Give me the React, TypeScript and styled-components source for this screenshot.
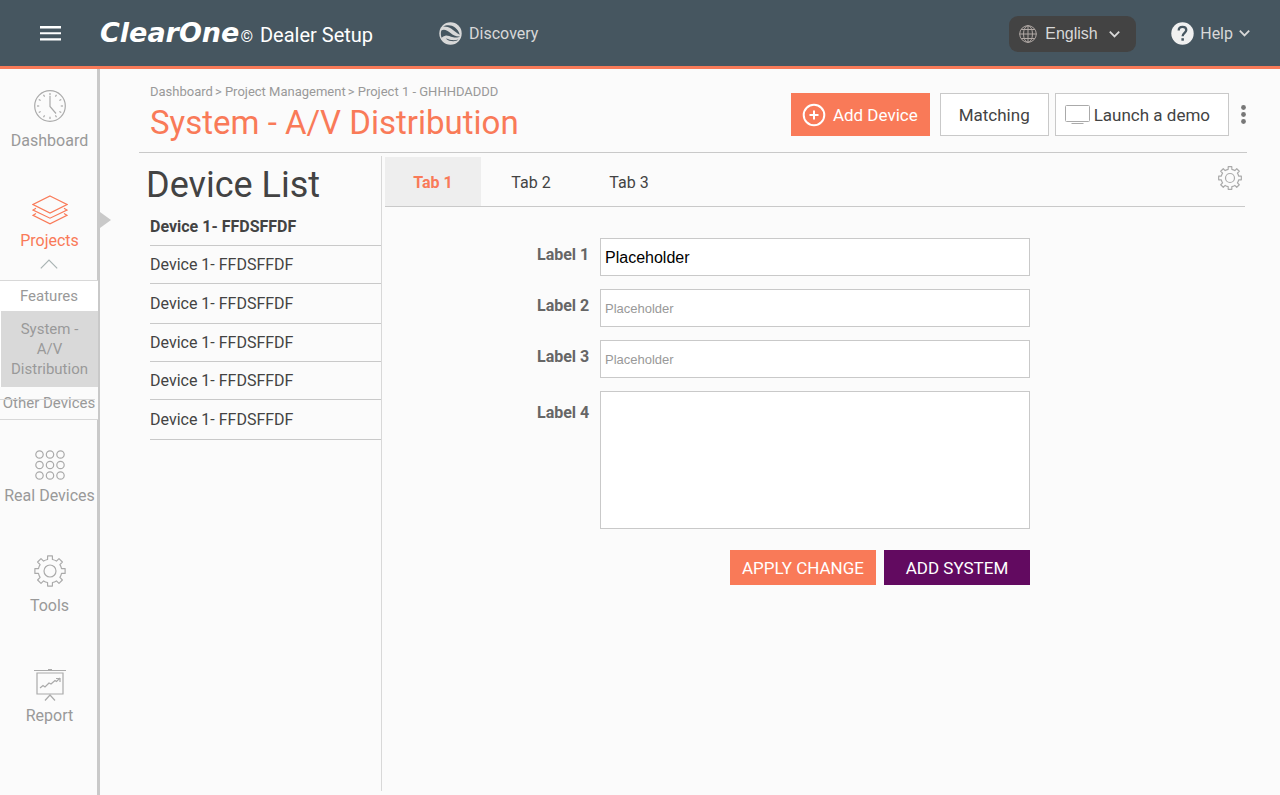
import React from "react";
import styled, { createGlobalStyle, css } from "styled-components";

const color = {
  slate: "#465660",
  orange: "#f97a58",
  purple: "#620a60",
  page: "#fbfbfb",
  rule: "#c9c9c9",
  muted: "#999999",
  text: "#434343",
  bright: "#d8d8d8",
};

const sans = `Roboto, "Liberation Sans", sans-serif`;
const arial = `"Liberation Sans", Arial, sans-serif`;

const GlobalStyle = createGlobalStyle`
  *, *::before, *::after { box-sizing: border-box; }
  body { margin: 0; background: ${color.page}; color: ${color.text}; font: 16px/20px ${sans}; }
  button, input, textarea, select { font: inherit; color: inherit; margin: 0; border-radius: 0; }
  button { padding: 0; border: 0; background: none; cursor: pointer; white-space: nowrap; }
  a { color: inherit; text-decoration: none; }
  h1, h2, ul, ol, p { margin: 0; padding: 0; font-weight: 400; list-style: none; }
  svg { display: block; flex: none; }
`;

/* ---------- top bar ---------- */

const TopBar = styled.header`
  display: flex;
  align-items: center;
  height: 69px;
  padding: 0 30px 0 40px;
  background: ${color.slate};
  border-bottom: 3px solid ${color.orange};
  color: ${color.bright};
`;

const MenuButton = styled.button`
  margin-right: 39px;
`;

const Brand = styled.a`
  display: flex;
  align-items: baseline;
  margin-right: 66px;
  color: #fff;
  font-size: 20px;
  white-space: nowrap;
`;

const BrandName = styled.span`
  margin-right: 1px;
  font: italic 700 27px/32px "DejaVu Sans", sans-serif;
`;

const BrandMark = styled.span`
  margin-right: 7px;
  font-size: 16px;
`;

const TopLink = styled.a`
  display: flex;
  align-items: center;
  gap: 7px;
`;

const TopLabel = styled.span`
  padding-top: 2px;
`;

const Language = styled.label`
  position: relative;
  display: flex;
  align-items: center;
  height: 36px;
  margin: 2px 35px 0 auto;
  border-radius: 9px;
  background: ${color.text};

  svg { position: absolute; pointer-events: none; }
  svg:first-child { left: 10px; }
  svg:last-child { right: 16px; }
`;

const LanguageSelect = styled.select`
  appearance: none;
  width: 127px;
  height: 36px;
  padding: 0 30px 0 36px;
  border: 0;
  background: none;
  font-family: ${arial};
`;

const HelpButton = styled.button`
  display: flex;
  align-items: center;
  gap: 6px;
`;

/* ---------- side navigation ---------- */

const Body = styled.div`
  display: flex;
  min-height: calc(100vh - 69px);
`;

const SideNav = styled.nav`
  flex: none;
  width: 100px;
  padding-top: 21px;
  border-right: 3px solid ${color.rule};
  color: ${color.muted};
`;

const NavItem = styled.a<{ $roomy?: boolean; $active?: boolean; $after: number }>`
  position: relative;
  display: flex;
  flex-direction: column;
  align-items: center;
  gap: ${(p) => (p.$roomy ? 9 : 5)}px;
  margin-bottom: ${(p) => p.$after}px;
  padding-left: 2px;
  white-space: nowrap;

  ${(p) =>
    p.$active &&
    css`
      color: ${color.orange};
      &::after {
        content: "";
        position: absolute;
        left: 100%;
        top: 18px;
        margin-left: 3px;
        border: solid transparent;
        border-width: 8px 0 8px 11px;
        border-left-color: ${color.rule};
      }
    `}
`;

const NavIcon = styled.span`
  display: grid;
  place-items: center;
  height: 32px;
`;

const Collapse = styled.button`
  display: block;
  margin: 0 auto 11px;
`;

const SubMenu = styled.ul`
  position: relative;
  width: 98px;
  margin-bottom: 29px;
  border-top: 1px solid ${color.bright};
  border-bottom: 1px solid ${color.bright};
  background: #fff;
  font-size: 15px;
  text-align: center;
`;

const SubItem = styled.li<{ $kind?: "current" | "struck" }>`
  position: relative;
  padding: 5px 0;
  white-space: nowrap;

  ${(p) =>
    p.$kind === "current" &&
    css`
      margin-left: 1px;
      padding: 8px 6px;
      background: #d9d9d9;
      white-space: normal;
    `}

  ${(p) =>
    p.$kind === "struck" &&
    css`
      padding: 6px 0;
      background: ${color.page};
      &::after {
        content: "";
        position: absolute;
        inset: 12px 3px auto 0;
        border-top: 1px solid ${color.bright};
      }
    `}
`;

/* ---------- page ---------- */

const Page = styled.main`
  display: flex;
  flex-direction: column;
  flex: 1;
  min-width: 0;
  padding: 0 33px 4px 39px;
`;

const PageHeader = styled.div`
  display: flex;
  justify-content: space-between;
  align-items: flex-start;
  padding: 15px 0 9px 11px;
  border-bottom: 1px solid ${color.rule};
`;

const Crumbs = styled.ol`
  display: flex;
  gap: 2px;
  color: ${color.muted};
  font-size: 13px;
  line-height: 16px;
  white-space: nowrap;

  li + li::before { content: "> "; }
`;

const Title = styled.h1`
  margin-top: 3px;
  color: ${color.orange};
  font-size: 33px;
  line-height: 40px;
  white-space: nowrap;
`;

const Actions = styled.div`
  display: flex;
  align-items: center;
  gap: 6px;
  padding-top: 9px;
`;

const ActionButton = styled.button<{ $primary?: boolean }>`
  display: flex;
  align-items: center;
  height: 43px;
  padding: 0 18px;
  border: 1px solid ${color.rule};
  background: #fff;
  font-size: 17px;

  &:has(svg) { padding-left: 9px; gap: 4px; }

  ${(p) =>
    p.$primary &&
    css`
      && { padding: 0 11px 0 10px; gap: 7px; }
      margin-right: 4px;
      border-color: ${color.orange};
      background: ${color.orange};
      color: #fff;
    `}
`;

const MoreButton = styled.button`
  padding: 0 1px 0 6px;
`;

const Columns = styled.div`
  display: flex;
  flex: 1;
  gap: 3px;
  padding: 3px 2px 0 0;
`;

const DeviceColumn = styled.aside`
  flex: none;
  width: 243px;
  padding-top: 6px;
  border-right: 1px solid ${color.bright};
`;

const DeviceHeading = styled.h2`
  padding-left: 7px;
  font-size: 36px;
  line-height: 46px;
`;

const DeviceList = styled.ul`
  margin-left: 11px;
`;

const DeviceRow = styled.li<{ $tall?: boolean; $selected?: boolean }>`
  display: flex;
  align-items: center;
  height: ${(p) => (p.$tall ? 40 : 38)}px;
  border-bottom: 1px solid ${color.rule};
  font-weight: ${(p) => (p.$selected ? 700 : 400)};
`;

const Panel = styled.section`
  flex: 1;
  min-width: 0;
`;

const Tabs = styled.div`
  display: flex;
  align-items: center;
  gap: 2px;
  padding: 1px 3px 0 0;
  border-bottom: 1px solid ${color.rule};
`;

const Tab = styled.button<{ $selected?: boolean }>`
  width: 96px;
  height: 49px;
  padding-top: 2px;
  ${(p) =>
    p.$selected &&
    css`
      background: #eeeeee;
      color: ${color.orange};
      font-weight: 700;
    `}
`;

const Settings = styled.button`
  margin: -8px 0 0 auto;
`;

const Form = styled.form`
  display: flex;
  flex-direction: column;
  gap: 13px;
  padding: 31px 25% 0 152px;
`;

const Field = styled.label`
  display: flex;
  align-items: flex-start;
`;

const FieldName = styled.span<{ $area?: boolean }>`
  flex: none;
  width: 63px;
  padding-top: ${(p) => (p.$area ? 12 : 7)}px;
  color: #666;
  font-weight: 700;
`;

const inputBox = css`
  flex: 1;
  min-width: 0;
  padding: 1px 4px 0;
  border: 1px solid ${color.rule};
  background: #fff;
  color: #000;
  font-family: ${arial};
`;

const TextInput = styled.input`
  ${inputBox}
  height: 38px;
  &:placeholder-shown { font-size: 13px; }
  &::placeholder { color: ${color.muted}; }
`;

const TextArea = styled.textarea`
  ${inputBox}
  height: 138px;
  resize: none;
`;

const FormActions = styled.div`
  display: flex;
  justify-content: flex-end;
  gap: 8px;
  padding-top: 8px;
`;

const FormButton = styled.button<{ $purple?: boolean }>`
  width: 146px;
  height: 35px;
  background: ${(p) => (p.$purple ? color.purple : color.orange)};
  color: #fff;
  font-size: 17px;
`;

/* ---------- icons ---------- */

const Chevron = () => (
  <svg width="11" height="8" viewBox="0 0 11 8" fill="none" stroke="currentColor" strokeWidth="1.8" aria-hidden>
    <path d="M.8 1.700 5.500 6.400l4.700-4.700" />
  </svg>
);

const MenuIcon = () => (
  <svg width="21" height="15" viewBox="0 0 21 15" fill="#fff" aria-hidden>
    <path d="M0 0h21v2.600H0zM0 6.200h21v2H0zM0 12.200h21v2.200H0z" />
  </svg>
);

const DiscoveryIcon = () => (
  <svg width="23" height="23" viewBox="0 0 23 23" aria-hidden>
    <circle cx="11.5" cy="11.5" r="11.2" fill={color.bright} />
    <g fill={color.slate}>
      <path d="M4 4.600C7.500 2.600 12.500 2.700 16 5.400c2.200 1.700 3.900 4.200 4.800 7.300-3-1.300-5.200-3.700-8.400-5.900C9.800 5.100 7 4.400 4 4.600z" />
      <path d="M2.300 8.400C5.500 6.900 8.500 8.600 11.500 11c2.700 2.200 5.700 3.700 9.500 3.400-1.200 1-4 1.500-6.800.9-3.700-.8-5.500-2-7.900-1.600-1.500.3-2.700 1-3.700 2-.8-2.400-1-4.900-.3-7.300z" />
      <path d="M6.800 16.500c2.100 0 3.200 1.200 5.400 1.500 2.500.3 4.800.2 7.200-.5-1.200 1.200-2.900 1.700-5 1.700-2.900 0-5.800-.5-7.600-2.700z" />
    </g>
  </svg>
);

const GlobeIcon = () => (
  <svg width="18" height="18" viewBox="0 0 18 18" fill="none" stroke="#b0a8a4" strokeWidth="1" aria-hidden>
    <circle cx="9" cy="9" r="8.300" />
    <ellipse cx="9" cy="9" rx="4.500" ry="8.300" />
    <path d="M9 .5v17M.5 9h17M2.200 4.500h13.600M2.200 13.500h13.600" />
  </svg>
);

const HelpIcon = () => (
  <svg width="23" height="23" viewBox="0 0 23 23" aria-hidden>
    <circle cx="11.500" cy="11.500" r="11.200" fill="#f0f0f0" />
    <path d="M7.700 8.400c0-2.200 1.600-3.600 3.800-3.600s3.800 1.300 3.800 3.300c0 2.600-3.700 3-3.700 6.200" fill="none" stroke={color.slate} strokeWidth="2.300" />
    <path d="M10.400 16.200h2.500v2.500h-2.500z" fill={color.slate} />
  </svg>
);

const ClockIcon = () => (
  <svg width="32" height="32" viewBox="0 0 32 32" fill="none" stroke="#aaa" strokeWidth="1.200" aria-hidden>
    <circle cx="16" cy="16" r="15.300" />
    {Array.from({ length: 12 }, (_, i) => (
      <path key={i} d="M16 3v2.200" transform={`rotate(${i * 30} 16 16)`} />
    ))}
    <path d="M16 6v10.500l6 7" />
  </svg>
);

const LayersIcon = () => (
  <svg width="36" height="30" viewBox="0 0 36 30" fill="none" stroke={color.orange} strokeWidth="1.200" aria-hidden>
    <path d="M18 1 35 9.500 18 18 1 9.500z" />
    <path d="M4 13.200 1 15l17 8.200L35 15l-3-1.800" />
    <path d="M4 18.500 1 20.300l17 8.500 17-8.500-3-1.800" />
  </svg>
);

const CollapseIcon = () => (
  <svg width="18" height="10" viewBox="0 0 18 10" fill="none" stroke="#a9b3b3" strokeWidth="1.200" aria-hidden>
    <path d="M.8 9.300 9 1l8.200 8.300" />
  </svg>
);

const GridIcon = () => (
  <svg width="30" height="30" viewBox="0 0 30 30" fill="none" stroke="#aaa" strokeWidth="1.200" aria-hidden>
    {[4.5, 15, 25.5].map((y) =>
      [4.5, 15, 25.5].map((x) => <circle key={`${x}-${y}`} cx={x} cy={y} r="3.700" />)
    )}
  </svg>
);

const gearPath = (() => {
  const at = (deg: number, r: number) => {
    const a = ((deg - 90) * Math.PI) / 180;
    return `${(16 + r * Math.cos(a)).toFixed(2)} ${(16 + r * Math.sin(a)).toFixed(2)}`;
  };
  const teeth = Array.from({ length: 8 }, (_, i) => {
    const c = i * 45;
    return `${at(c - 12, 11.8)} L${at(c - 9, 15.3)} L${at(c + 9, 15.3)} L${at(c + 12, 11.8)}`;
  });
  return `M${teeth.join(" A11.8 11.8 0 0 1 ")} A11.8 11.8 0 0 1 ${at(-12, 11.8)}z`;
})();

const GearIcon = ({ size, hub }: { size: number; hub: number }) => (
  <svg width={size} height={size} viewBox="0 0 32 32" fill="none" stroke="#aaa" strokeWidth={38 / size} strokeLinejoin="round" aria-hidden>
    <path d={gearPath} />
    <circle cx="16" cy="16" r={hub} />
  </svg>
);

const ReportIcon = () => (
  <svg width="32" height="32" viewBox="0 0 32 32" fill="none" stroke="#aaa" aria-hidden>
    <path d="M0 1.500h32M14 .5h4" />
    <path d="M3 4h26v21H3z" strokeWidth="1.200" />
    <path d="m6 19 3-2.500 2 1.500 4-4 2 1 4-3.500 1.500 1L26 9M22 9.500h4V13M11 31.500l5-5.500 5 5.500" strokeWidth="1.200" />
  </svg>
);

const PlusIcon = () => (
  <svg width="24" height="24" viewBox="0 0 24 24" fill="none" stroke="#fff" strokeWidth="2" aria-hidden>
    <circle cx="12" cy="12" r="10.300" />
    <path d="M12 7.500v9M7.500 12h9" />
  </svg>
);

const ScreenIcon = () => (
  <svg width="25" height="19" viewBox="0 0 25 19" fill="none" stroke="#aaa" aria-hidden>
    <rect x=".5" y=".5" width="24" height="16" rx="1" />
    <path d="M6.500 18.500h12" />
  </svg>
);

const MoreIcon = () => (
  <svg width="5" height="19" viewBox="0 0 5 19" fill="#777" aria-hidden>
    <circle cx="2.500" cy="2.500" r="2.400" />
    <circle cx="2.500" cy="9.500" r="2.400" />
    <circle cx="2.500" cy="16.500" r="2.400" />
  </svg>
);

/* ---------- content ---------- */

const devices: { selected?: boolean; tall?: boolean }[] = [
  { selected: true },
  {},
  { tall: true },
  {},
  {},
  { tall: true },
];

export default function App() {
  return (
    <>
      <GlobalStyle />
      <TopBar>
        <MenuButton type="button" aria-label="Menu"><MenuIcon /></MenuButton>
        <Brand href="#home">
          <BrandName>ClearOne</BrandName>
          <BrandMark>©</BrandMark>
          <span>Dealer Setup</span>
        </Brand>
        <TopLink href="#discovery"><DiscoveryIcon /><TopLabel>Discovery</TopLabel></TopLink>
        <Language>
          <GlobeIcon />
          <LanguageSelect aria-label="Language" defaultValue="English">
            <option>English</option>
          </LanguageSelect>
          <Chevron />
        </Language>
        <HelpButton type="button"><HelpIcon /><TopLabel>Help</TopLabel><Chevron /></HelpButton>
      </TopBar>

      <Body>
        <SideNav>
          <NavItem href="#dashboard" $roomy $after={43}>
            <NavIcon><ClockIcon /></NavIcon>Dashboard
          </NavItem>
          <NavItem href="#projects" $active $after={8}>
            <NavIcon><LayersIcon /></NavIcon>Projects
          </NavItem>
          <Collapse type="button" aria-label="Collapse projects"><CollapseIcon /></Collapse>
          <SubMenu>
            <SubItem><a href="#features">Features</a></SubItem>
            <SubItem $kind="current"><a href="#system">System - A/V Distribution</a></SubItem>
            <SubItem $kind="struck"><a href="#other">Other Devices</a></SubItem>
          </SubMenu>
          <NavItem href="#real" $after={49}>
            <NavIcon><GridIcon /></NavIcon>Real Devices
          </NavItem>
          <NavItem href="#tools" $roomy $after={53}>
            <NavIcon><GearIcon size={32} hub={6} /></NavIcon>Tools
          </NavItem>
          <NavItem href="#report" $after={0}>
            <NavIcon><ReportIcon /></NavIcon>Report
          </NavItem>
        </SideNav>

        <Page>
          <PageHeader>
            <div>
              <Crumbs>
                <li><a href="#dashboard">Dashboard</a></li>
                <li><a href="#management">Project Management</a></li>
                <li>Project 1 - GHHHDADDD</li>
              </Crumbs>
              <Title>System - A/V Distribution</Title>
            </div>
            <Actions>
              <ActionButton type="button" $primary><PlusIcon />Add Device</ActionButton>
              <ActionButton type="button">Matching</ActionButton>
              <ActionButton type="button"><ScreenIcon />Launch a demo</ActionButton>
              <MoreButton type="button" aria-label="More actions"><MoreIcon /></MoreButton>
            </Actions>
          </PageHeader>

          <Columns>
            <DeviceColumn>
              <DeviceHeading>Device List</DeviceHeading>
              <DeviceList>
                {devices.map((d, i) => (
                  <DeviceRow key={i} $tall={d.tall} $selected={d.selected}>
                    <a href="#device">Device 1- FFDSFFDF</a>
                  </DeviceRow>
                ))}
              </DeviceList>
            </DeviceColumn>

            <Panel>
              <Tabs role="tablist">
                <Tab type="button" role="tab" aria-selected $selected>Tab 1</Tab>
                <Tab type="button" role="tab" aria-selected={false}>Tab 2</Tab>
                <Tab type="button" role="tab" aria-selected={false}>Tab 3</Tab>
                <Settings type="button" aria-label="Settings"><GearIcon size={24} hub={6} /></Settings>
              </Tabs>
              <Form onSubmit={(e) => e.preventDefault()}>
                <Field>
                  <FieldName>Label 1</FieldName>
                  <TextInput type="text" defaultValue="Placeholder" />
                </Field>
                <Field>
                  <FieldName>Label 2</FieldName>
                  <TextInput type="text" placeholder="Placeholder" />
                </Field>
                <Field>
                  <FieldName>Label 3</FieldName>
                  <TextInput type="text" placeholder="Placeholder" />
                </Field>
                <Field>
                  <FieldName $area>Label 4</FieldName>
                  <TextArea />
                </Field>
                <FormActions>
                  <FormButton type="submit">APPLY CHANGE</FormButton>
                  <FormButton type="button" $purple>ADD SYSTEM</FormButton>
                </FormActions>
              </Form>
            </Panel>
          </Columns>
        </Page>
      </Body>
    </>
  );
}
